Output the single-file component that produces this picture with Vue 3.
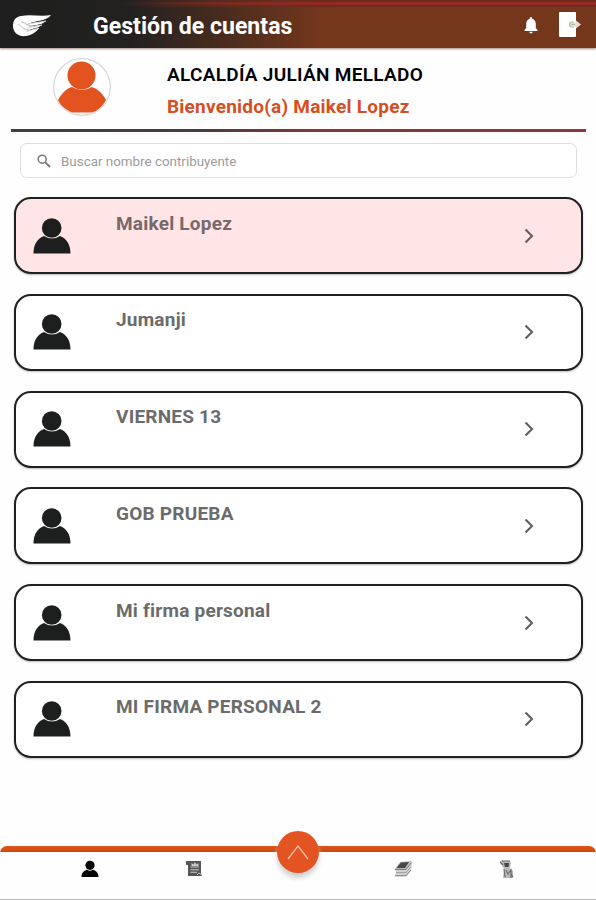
<script setup>
import { ref } from 'vue'

const search = ref('')
const selected = ref(0)
const accounts = ref([
  'Maikel Lopez',
  'Jumanji',
  'VIERNES 13',
  'GOB PRUEBA',
  'Mi firma personal',
  'MI FIRMA PERSONAL 2'
])
</script>

<template>
  <div class="screen">
    <header class="app-bar">
      <svg class="logo" width="40" height="24" viewBox="0 0 40 24">
        <path d="M39 1C29 3 19 0 9 2C3 3 1 7 1 12C1 19 7 23 14 22C21 21 25 17 27 14C22 16 18 16 14 18C19 14 25 15 30 11C25 12 20 12 15 14C21 10 29 12 34 7C27 9 20 8 14 11C22 6 34 8 39 1Z" fill="#fff" />
        <path d="M14 18C18 16 22 16 27 14M15 14C20 12 25 12 30 11M14 11C20 8 27 9 34 7" fill="none" stroke="#ddd" stroke-width="1.1" />
        <path d="M6 10C10 12 10 15 17 16M9 8C15 9 14 12 23 12" fill="none" stroke="#aaa" stroke-width=".8" />
      </svg>
      <h1>Gestión de cuentas</h1>
      <svg class="bell" width="14" height="17" viewBox="0 0 14 17">
        <path d="M7 0C6 0 5.8 1 5.8 1.7C3.3 2.4 2.2 4.5 2.2 7V11L.5 13V14H13.5V13L11.8 11V7C11.8 4.5 10.7 2.4 8.2 1.7C8.2 1 8 0 7 0ZM5.3 14.7H8.7C8.5 17 5.5 17 5.3 14.7Z" fill="#fff" />
      </svg>
      <svg class="exit" width="23" height="25" viewBox="0 0 23 25">
        <rect width="17" height="25" rx="1" fill="#fff" />
        <path d="M11 10.5H17V8.5L22 12.5L17 16.5V14.5H11Z" fill="#e6ddd5" />
        <path d="M15 10H12.5C10 10 10 15 12.5 15H15M12.5 12.5H16" fill="none" stroke="#b5b5ac" stroke-width="1.2" />
      </svg>
    </header>

    <section class="profile">
      <svg class="avatar" width="60" height="60" viewBox="0 0 60 60">
        <circle cx="30" cy="30" r="28.3" fill="#fff" stroke="#d9d9d9" stroke-width="1.3" />
        <path d="M6 43C10 36 15 31 20 30Q30 36 40 30C46 32 51 37 54 43C50 50 45 54 40 55.5H20C14 53 9 49 6 43Z" fill="#e3531f" />
        <circle cx="29.5" cy="18.5" r="14" fill="#e3531f" />
      </svg>
      <div class="profile-text">
        <h2>ALCALDÍA JULIÁN MELLADO</h2>
        <p>Bienvenido(a) Maikel Lopez</p>
      </div>
    </section>
    <div class="divider"></div>

    <label class="search">
      <svg width="14" height="14" viewBox="0 0 14 14">
        <circle cx="5.2" cy="5.2" r="4" fill="none" stroke="#777" stroke-width="1.5" />
        <path d="M8.2 8.2L13 13" stroke="#777" stroke-width="1.9" />
      </svg>
      <input v-model="search" type="text" placeholder="Buscar nombre contribuyente">
    </label>

    <main class="list">
      <div
        v-for="(account, index) in accounts"
        :key="account"
        class="card"
        :class="{ active: index === selected }"
        @click="selected = index"
      >
        <svg class="person" width="38" height="36" viewBox="0 0 38 36">
          <path d="M.5 35.5C.5 26 5 20 11 18Q19 23 27 18C33 20 37.5 26 37.5 35.5Z" fill="#1c1f1e" />
          <circle cx="18.7" cy="10" r="9.8" fill="#1c1f1e" />
        </svg>
        <span class="name">{{ account }}</span>
        <svg class="chevron" width="10" height="16" viewBox="0 0 10 16">
          <path d="M1.5 1.5L8 8L1.5 14.5" fill="none" stroke="#665c5d" stroke-width="2.1" />
        </svg>
      </div>
    </main>

    <nav class="tab-bar">
      <svg width="18" height="18" viewBox="0 0 18 18">
        <path d="M.5 17C.5 12 4 10.5 6 9.5Q9 12 12 9.5C14 10.5 17.5 12 17.5 17Z" fill="#050505" />
        <circle cx="9" cy="5.3" r="4.6" fill="#050505" />
      </svg>
      <svg width="18" height="18" viewBox="0 0 18 18">
        <path d="M1 1H16V13L17 16H3V5H1Z" fill="#555" />
        <path d="M5.5 7H14M5.5 9.8H14M5.5 12.3H12" stroke="#c5c5c5" stroke-width="1" />
        <path d="M6.5 6V3L8.5 4.5L10 2L11.5 4.5L13.5 3V6Z" fill="#ccc" />
        <path d="M12 15L14 13L17 15" fill="none" stroke="#ccc" />
      </svg>
      <button class="up">
        <svg width="22" height="16" viewBox="0 0 22 16">
          <path d="M1 15L11 2L21 15" fill="none" stroke="#ffc2a2" stroke-width="1.3" />
        </svg>
      </button>
      <svg width="18" height="18" viewBox="0 0 18 18">
        <path d="M1 9H12L17.5 2V9L12 16H1L2 12.5Z" fill="#d2d2d2" />
        <path d="M1 9L6 2L18 1L12 9Z" fill="#bbb" />
        <path d="M2.5 8L7 2.5L15 2L11 8Z" fill="#484848" />
        <path d="M1 9.5H12L17.5 2.5M1 15.8H12L17 10" fill="none" stroke="#777" stroke-width="1" />
        <path d="M2 12.6H12L17 6.5" fill="none" stroke="#999" stroke-width=".9" />
      </svg>
      <svg width="18" height="19" viewBox="0 0 18 19">
        <path d="M2 2L4 0L6 1H12L13 3L12 8L15 11V18H5L6 9L3 4Z" fill="#b9b9b9" />
        <path d="M6 3H11L10.5 7H7Z" fill="#454545" />
        <path d="M2 2L5 5M4 1H12M6 9L7 17M8 10L10 14L13 10V18M13 14L15 17" fill="none" stroke="#666" stroke-width="1.1" />
      </svg>
    </nav>
  </div>
</template>

<style scoped>
.screen {
  display: flex;
  flex-direction: column;
  width: 596px;
  height: 900px;
  box-sizing: border-box;
  overflow: hidden;
  background: #fefefe;
  border-bottom: 1px solid #bbb;
  font-family: Roboto, "Liberation Sans", sans-serif;
}

h1,
h2,
p {
  margin: 0;
}

.app-bar {
  display: flex;
  align-items: center;
  flex: none;
  height: 48px;
  box-sizing: border-box;
  padding: 3px 14px 0 12px;
  background:
    linear-gradient(90deg, transparent 20%, #98291e 58%) 0 2px / 100% 3px no-repeat,
    linear-gradient(90deg, transparent 20%, #692b22 58%) 0 0 / 100% 7px no-repeat,
    linear-gradient(90deg, #1e1e1e 0%, #222120 22%, #74371c 54%, #74371c 100%);
  box-shadow: 0 1px 2px #a58a7e;
}

.app-bar h1 {
  flex: 1;
  margin: 2px 0 0 41px;
  font-size: 23.1px;
  line-height: 28px;
  font-weight: 700;
  color: #fff;
}

.bell {
  margin-right: 21px;
}

.exit {
  margin-top: -2px;
}

.profile {
  display: flex;
  flex: none;
  height: 81px;
  padding-left: 52px;
}

.avatar {
  margin-top: 9px;
}

.profile-text {
  margin: 15px 0 0 55px;
}

.profile-text h2 {
  font-size: 19px;
  line-height: 24px;
  font-weight: 600;
  letter-spacing: 0.3px;
  color: #000;
}

.profile-text p {
  margin-top: 8px;
  font-size: 19px;
  line-height: 23px;
  font-weight: 700;
  letter-spacing: 0.23px;
  color: #d64e21;
}

.divider {
  flex: none;
  height: 3px;
  margin: 0 10px 0 11px;
  background: linear-gradient(90deg, #414042 0%, #493c3c 32%, #7c3b36 52%, #8c3b39 100%);
}

.search {
  display: flex;
  align-items: center;
  flex: none;
  height: 35px;
  box-sizing: border-box;
  margin: 11px 19px 0 20px;
  padding-left: 16px;
  border: 1.5px solid #dedede;
  border-radius: 7px;
  background: #fff;
}

.search input {
  flex: 1;
  margin-left: 10px;
  padding: 1px 0 0;
  border: 0;
  outline: 0;
  background: none;
  font-family: inherit;
  font-size: 13.4px;
  color: #555;
}

.search input::placeholder {
  color: #9b9b9b;
}

.list {
  display: flex;
  flex-direction: column;
  flex: 1;
  gap: 19.8px;
  padding: 19px 13px 0 14px;
}

.card {
  display: flex;
  align-items: center;
  height: 77px;
  box-sizing: border-box;
  padding: 0 47px 0 17px;
  border: 2px solid #202020;
  border-radius: 17px;
  background: #fff;
  box-shadow: 0 1px 2px #bbb;
}

.card.active {
  background: #ffe5e5;
}

.name {
  flex: 1;
  align-self: flex-start;
  margin: 13.5px 0 0 45px;
  font-size: 19px;
  line-height: 22px;
  font-weight: 700;
  letter-spacing: 0.22px;
  color: #6b6b6b;
}

.active .name {
  color: #79686a;
}

.tab-bar {
  display: grid;
  grid-template-columns: repeat(5, 1fr);
  justify-items: center;
  align-items: start;
  flex: none;
  height: 53px;
  box-sizing: border-box;
  padding: 14px 37px 0 38px;
  background: linear-gradient(#dc551b, #cf470b) 0 0 / 100% 6px no-repeat;
  border-radius: 7px 7px 0 0;
}

.up {
  display: flex;
  align-items: center;
  justify-content: center;
  width: 42px;
  height: 42px;
  margin-top: -29px;
  padding: 0;
  border: 0;
  border-radius: 50%;
  background: #e45423;
  box-shadow: 0 5px 5px #d2d2d2;
}
</style>
